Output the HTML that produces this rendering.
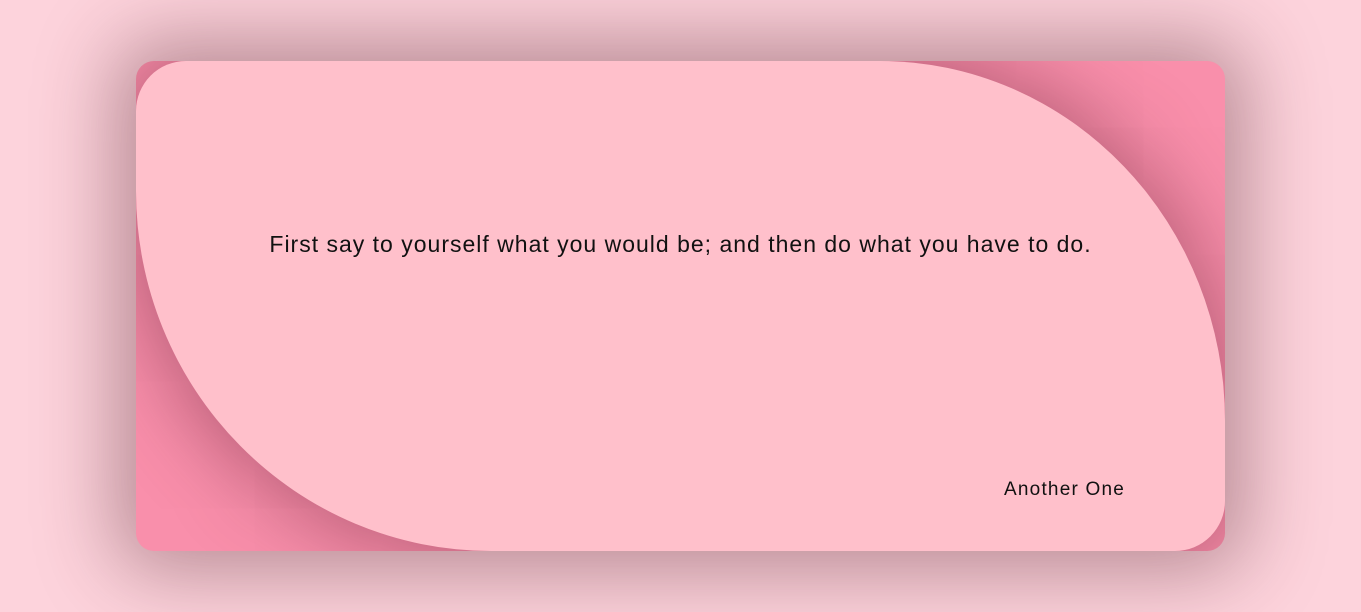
<!DOCTYPE html>
<html><head><style>
html,body{margin:0;padding:0;width:1361px;height:612px;overflow:hidden;background:#fdd3dc;font-family:"Liberation Sans",sans-serif}
.card{position:absolute;left:136px;top:61px;width:1089px;height:490px;border-radius:18px;background:#f98fab;box-shadow:0 0 80px 20px rgba(80,30,40,0.4);overflow:hidden}
.inner{position:absolute;left:0;top:0;width:1089px;height:490px;background:#ffc0cb;border-radius:50px 345px 50px 355px / 50px 360px 50px 360px;box-shadow:0 0 80px 10px rgba(100,30,50,0.45)}
.q{position:absolute;left:0;width:1089px;top:170px;text-align:center;font-size:23px;color:#111;letter-spacing:1px}
.a{position:absolute;right:100px;top:418px;font-size:19px;color:#111;letter-spacing:1.2px}
</style></head><body>
<div class="card"><div class="inner">
<div class="q">First say to yourself what you would be; and then do what you have to do.</div>
<div class="a">Another One</div>
</div></div>
</body></html>
